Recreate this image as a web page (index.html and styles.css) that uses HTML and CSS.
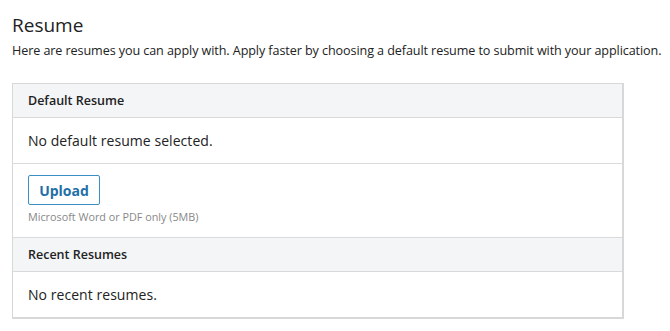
FILE: index.html
```html
<!DOCTYPE html>
<html>
<head>
<meta charset="utf-8">
<link rel="stylesheet" href="styles.css">
</head>
<body>
<div class="page">
  <h1 class="title">Resume</h1>
  <p class="intro">Here are resumes you can apply with. Apply faster by choosing a default resume to submit with your application.</p>
  <div class="card">
    <div class="card-head">Default Resume</div>
    <div class="card-row">No default resume selected.</div>
    <div class="upload">
      <button class="btn">Upload</button>
      <div class="hint">Microsoft Word or PDF only (5MB)</div>
    </div>
    <div class="card-head">Recent Resumes</div>
    <div class="card-row last">No recent resumes.</div>
  </div>
</div>
</body>
</html>
```
FILE: styles.css
```css
html, body {
  margin: 0;
  padding: 0;
  background: #fff;
}
body {
  font-family: "Open Sans", "Noto Sans", sans-serif;
  color: #222;
}
.page {
  padding: 12px 0 0 12px;
}
.title {
  margin: 0;
  font-size: 19px;
  font-weight: 400;
  line-height: 26px;
  color: #222;
}
.intro {
  margin: 4px 0 0 0;
  font-size: 12.6px;
  line-height: 18px;
  letter-spacing: -0.09px;
  color: #222;
}
.card {
  margin-top: 23px;
  width: 609px;
  border: 1px solid #d8d8d8;
  border-bottom-width: 2px;
  border-right-width: 2px;
}
.card-head {
  background: #f3f5f7;
  height: 33px;
  line-height: 34px;
  padding-left: 15px;
  font-size: 12.5px;
  font-weight: 600;
  color: #222;
  border-bottom: 1px solid #dadada;
}
.card-row {
  height: 45px;
  line-height: 46px;
  padding-left: 15px;
  font-size: 14px;
  letter-spacing: 0.05px;
  color: #222;
  border-bottom: 1px solid #dadada;
}
.card-row.last {
  border-bottom: none;
}
.upload {
  padding: 11px 15px 0 15px;
  height: 62px;
  border-bottom: 1px solid #dadada;
}
.btn {
  display: block;
  width: 72px;
  height: 30px;
  background: #fff;
  border: 1px solid #3a8fc7;
  border-radius: 2px;
  font-family: "Open Sans", "Noto Sans", sans-serif;
  font-size: 14px;
  font-weight: 700;
  color: #1f6fa8;
  padding: 0;
  cursor: pointer;
}
.hint {
  margin-top: 5px;
  font-size: 10.8px;
  color: #888;
  line-height: 14px;
}
```
